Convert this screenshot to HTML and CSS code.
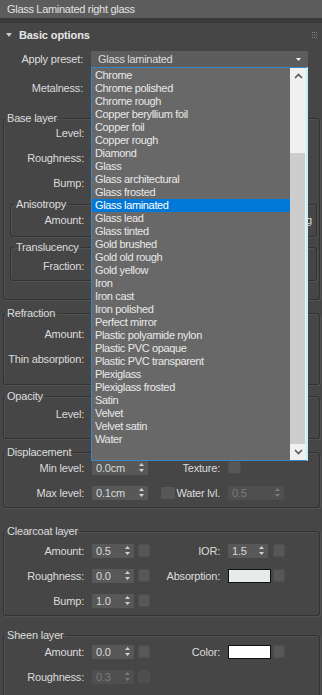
FILE: index.html
```html
<!DOCTYPE html>
<html lang="en">
<head>
    <meta charset="UTF-8">
    <meta name="viewport" content="width=device-width, initial-scale=1.0">
    <title>Glass Laminated right glass</title>
    <link rel="stylesheet" href="styles.css">
</head>
<body>
    <div class="panel">
        <div class="title-field">Glass Laminated right glass</div>
        <div class="title-gap"></div>

        <div class="rollout">
            <div class="rollout-head">
                <svg class="twisty" width="6" height="4" viewBox="0 0 6 4"><path d="M0 0h6L3 4z" fill="#c8c8c8"/></svg>
                <span>Basic options</span>
                <svg class="grip" width="5" height="6" viewBox="0 0 5 6"><path d="M0 0h1v1H0zM2 0h1v1H2zM4 0h1v1H4zM0 2.5h1v1H0zM2 2.5h1v1H2zM4 2.5h1v1H4zM0 5h1v1H0zM2 5h1v1H2zM4 5h1v1H4z" fill="#8a8a8a"/></svg>
            </div>

            <div class="row top">
                <span class="lbl">Apply preset:</span>
                <div class="select">
                    <span>Glass laminated</span>
                    <svg width="5" height="3" viewBox="0 0 5 3"><path d="M0 0h5L2.5 3z" fill="#f0f0f0"/></svg>
                </div>
            </div>
            <!-- controls of the rows below are hidden by the open list -->
            <div class="row top metal">
                <span class="lbl">Metalness:</span>
            </div>

            <fieldset class="group g-base">
                <legend>Base layer</legend>
                <div class="body">
                    <div class="row"><span class="lbl">Level:</span></div>
                    <div class="row"><span class="lbl">Roughness:</span></div>
                    <div class="row"><span class="lbl">Bump:</span></div>

                    <fieldset class="group nested g-aniso">
                        <legend>Anisotropy</legend>
                        <div class="body">
                            <div class="row"><span class="lbl">Amount:</span><span class="far">g</span></div>
                        </div>
                    </fieldset>

                    <fieldset class="group nested g-transl">
                        <legend>Translucency</legend>
                        <div class="body">
                            <div class="row"><span class="lbl">Fraction:</span></div>
                        </div>
                    </fieldset>
                </div>
            </fieldset>

            <fieldset class="group g-refr">
                <legend>Refraction</legend>
                <div class="body">
                    <div class="row"><span class="lbl">Amount:</span></div>
                    <div class="row"><span class="lbl">Thin absorption:</span></div>
                </div>
            </fieldset>

            <fieldset class="group g-opac">
                <legend>Opacity</legend>
                <div class="body">
                    <div class="row"><span class="lbl">Level:</span></div>
                </div>
            </fieldset>

            <fieldset class="group g-disp">
                <legend>Displacement</legend>
                <div class="body">
                    <div class="row">
                        <span class="lbl">Min level:</span>
                        <div class="cell1">
                            <div class="spin w56"><span>0.0cm</span><svg width="5" height="9" viewBox="0 0 5 9"><path d="M2.5 0L5 3H0zM0 6h5L2.5 9z" fill="#d0d0d0"/></svg></div>
                        </div>
                        <span class="lbl2">Texture:</span>
                        <div class="cell2"><span class="sq big"></span></div>
                    </div>
                    <div class="row">
                        <span class="lbl">Max level:</span>
                        <div class="cell1">
                            <div class="spin w56"><span>0.1cm</span><svg width="5" height="9" viewBox="0 0 5 9"><path d="M2.5 0L5 3H0zM0 6h5L2.5 9z" fill="#d0d0d0"/></svg></div>
                        </div>
                        <span class="lbl2"><span class="check"></span><span>Water lvl.</span></span>
                        <div class="cell2">
                            <div class="spin w56 off"><span>0.5</span><svg width="5" height="9" viewBox="0 0 5 9"><path d="M2.5 0L5 3H0zM0 6h5L2.5 9z" fill="#7a7a7a"/></svg></div>
                        </div>
                    </div>
                </div>
            </fieldset>

            <fieldset class="group g-clear">
                <legend>Clearcoat layer</legend>
                <div class="body">
                    <div class="row">
                        <span class="lbl">Amount:</span>
                        <div class="cell1"><div class="spin w42"><span>0.5</span><svg width="5" height="9" viewBox="0 0 5 9"><path d="M2.5 0L5 3H0zM0 6h5L2.5 9z" fill="#d0d0d0"/></svg></div><span class="sq"></span></div>
                        <span class="lbl2">IOR:</span>
                        <div class="cell2"><div class="spin w40"><span>1.5</span><svg width="5" height="9" viewBox="0 0 5 9"><path d="M2.5 0L5 3H0zM0 6h5L2.5 9z" fill="#d0d0d0"/></svg></div><span class="sq"></span></div>
                    </div>
                    <div class="row">
                        <span class="lbl">Roughness:</span>
                        <div class="cell1"><div class="spin w42"><span>0.0</span><svg width="5" height="9" viewBox="0 0 5 9"><path d="M2.5 0L5 3H0zM0 6h5L2.5 9z" fill="#d0d0d0"/></svg></div><span class="sq"></span></div>
                        <span class="lbl2">Absorption:</span>
                        <div class="cell2"><span class="swatch absorb"></span><span class="sq"></span></div>
                    </div>
                    <div class="row">
                        <span class="lbl">Bump:</span>
                        <div class="cell1"><div class="spin w42"><span>1.0</span><svg width="5" height="9" viewBox="0 0 5 9"><path d="M2.5 0L5 3H0zM0 6h5L2.5 9z" fill="#d0d0d0"/></svg></div><span class="sq"></span></div>
                    </div>
                </div>
            </fieldset>

            <fieldset class="group g-sheen">
                <legend>Sheen layer</legend>
                <div class="body">
                    <div class="row">
                        <span class="lbl">Amount:</span>
                        <div class="cell1"><div class="spin w42"><span>0.0</span><svg width="5" height="9" viewBox="0 0 5 9"><path d="M2.5 0L5 3H0zM0 6h5L2.5 9z" fill="#d0d0d0"/></svg></div><span class="sq"></span></div>
                        <span class="lbl2">Color:</span>
                        <div class="cell2"><span class="swatch"></span><span class="sq"></span></div>
                    </div>
                    <div class="row">
                        <span class="lbl">Roughness:</span>
                        <div class="cell1"><div class="spin w42 off"><span>0.3</span><svg width="5" height="9" viewBox="0 0 5 9"><path d="M2.5 0L5 3H0zM0 6h5L2.5 9z" fill="#7a7a7a"/></svg></div><span class="sq dim"></span></div>
                    </div>
                </div>
            </fieldset>
        </div>

        <!-- open dropdown of "Apply preset" -->
        <div class="preset-list">
            <ul class="items">
                <li>Chrome</li>
                <li>Chrome polished</li>
                <li>Chrome rough</li>
                <li>Copper beryllium foil</li>
                <li>Copper foil</li>
                <li>Copper rough</li>
                <li>Diamond</li>
                <li>Glass</li>
                <li>Glass architectural</li>
                <li>Glass frosted</li>
                <li class="sel">Glass laminated</li>
                <li>Glass lead</li>
                <li>Glass tinted</li>
                <li>Gold brushed</li>
                <li>Gold old rough</li>
                <li>Gold yellow</li>
                <li>Iron</li>
                <li>Iron cast</li>
                <li>Iron polished</li>
                <li>Perfect mirror</li>
                <li>Plastic polyamide nylon</li>
                <li>Plastic PVC opaque</li>
                <li>Plastic PVC transparent</li>
                <li>Plexiglass</li>
                <li>Plexiglass frosted</li>
                <li>Satin</li>
                <li>Velvet</li>
                <li>Velvet satin</li>
                <li>Water</li>
            </ul>
            <div class="scrollbar">
                <div class="sb-btn"><svg width="9" height="6" viewBox="0 0 9 6"><path d="M1 5L4.5 1.5 8 5" fill="none" stroke="#5a5a5a" stroke-width="1.6"/></svg></div>
                <div class="sb-space"></div>
                <div class="sb-thumb"></div>
                <div class="sb-btn"><svg width="9" height="6" viewBox="0 0 9 6"><path d="M1 1l3.5 3.5L8 1" fill="none" stroke="#5a5a5a" stroke-width="1.6"/></svg></div>
            </div>
        </div>
    </div>
</body>
</html>
```

FILE: styles.css
```css
* {
    margin: 0;
    padding: 0;
    box-sizing: border-box;
}

body {
    background: #464646;
    font-family: "Liberation Sans", Arial, sans-serif;
    font-size: 11px;
    color: #dcdcdc;
    letter-spacing: -0.2px;
}

.panel {
    position: relative;
    width: 322px;
    height: 695px;
    overflow: hidden;
}

.title-field {
    height: 18px;
    line-height: 18px;
    padding-left: 7px;
    background: #5c5c5c;
    color: #e2e2e2;
    letter-spacing: -0.3px;
}

.title-gap {
    height: 5px;
    background: #3b3b3b;
}

.rollout-head {
    display: flex;
    align-items: center;
    height: 24px;
    padding: 0 5px 0 6px;
    font-weight: bold;
    color: #e6e6e6;
    letter-spacing: -0.1px;
}

.twisty {
    margin-right: 7px;
}

.grip {
    margin-left: auto;
}

/* rows */
.row {
    display: flex;
    align-items: center;
    height: 25px;
}

.row.top {
    height: 24px;
}

.row.metal {
    margin-top: 5px;
}

.lbl {
    flex: none;
    width: 88px;
    padding-right: 8px;
    text-align: right;
    white-space: nowrap;
}

.top .lbl {
    width: 91px;
}

.nested .lbl {
    width: 81px;
}

.cell1 {
    flex: none;
    width: 70px;
    display: flex;
    align-items: center;
    gap: 4px;
}

.lbl2 {
    flex: none;
    width: 66px;
    padding-right: 8px;
    display: flex;
    align-items: center;
    justify-content: flex-end;
    white-space: nowrap;
}

.cell2 {
    display: flex;
    align-items: center;
}

.far {
    margin-left: auto;
    margin-right: 4px;
}

/* controls */
.select {
    width: 217px;
    height: 17px;
    display: flex;
    align-items: center;
    justify-content: space-between;
    padding: 0 7px;
    background: #5d5d5d;
    letter-spacing: -0.3px;
}

.spin {
    flex: none;
    height: 14px;
    display: flex;
    align-items: center;
    justify-content: space-between;
    padding: 0 4px;
    background: #585858;
    border-radius: 1px;
    color: #d8d8d8;
}

.spin.off {
    color: #7c7c7c;
    background: #4f4f4f;
}

.w56 { width: 56px; }
.w42 { width: 42px; }
.w40 { width: 40px; }

.sq {
    flex: none;
    width: 12px;
    height: 13px;
    background: #575757;
    border: 1px solid #4f4f4f;
    border-radius: 2px;
}

.cell2 .sq {
    margin-left: 5px;
}

.cell2 .sq.big {
    width: 13px;
    margin-left: 0;
}

.sq.dim {
    background: #4e4e4e;
}

.check {
    width: 14px;
    height: 12px;
    margin-right: auto;
    margin-left: -1px;
    background: #575757;
    border-radius: 2px;
}

.swatch {
    width: 43px;
    height: 14px;
    background: #ffffff;
    border: 1px solid #111;
}

.swatch.absorb {
    background: #e8ece9;
}

.cell2 .swatch + .sq {
    margin-left: 2px;
}

/* group boxes */
.group {
    min-width: 0;
    margin: 0 2px 0 3px;
    padding: 0;
    border: 1px solid #323232;
    border-radius: 3px;
    box-shadow: inset 1px 1px 0 #525252, 1px 1px 0 #525252;
}

.group legend {
    height: 12px;
    line-height: 12px;
    margin-left: 1px;
    padding: 0 2px;
    color: #dcdcdc;
}

.group.nested {
    margin: 0 2px 0 6px;
}

.group.nested legend {
    margin-left: 3px;
}

.group.g-base { margin-top: 12px; padding-bottom: 18px; }
.g-base > .body { margin-top: -4px; }

.group.g-aniso { margin-top: 3px; padding-bottom: 4px; }
.g-aniso > .body { margin-top: -3px; }

.group.g-transl { margin-top: 4px; padding-bottom: 2px; }

.group.g-refr { margin-top: 7px; padding-bottom: 13px; }
.g-refr > .body { margin-top: 2px; }

.group.g-opac { margin-top: 5px; padding-bottom: 12px; }
.g-opac > .body { margin-top: -1px; }

.group.g-disp { margin-top: 7px; padding-bottom: 2px; }
.g-disp > .body { margin-top: -3px; }

.group.g-clear { margin-top: 17px; padding-bottom: 2px; }
.g-clear > .body { margin-top: 1px; }

.group.g-sheen { margin-top: 13px; padding-bottom: 20px; }
.g-sheen > .body { margin-top: -2px; }

/* dropdown list */
.preset-list {
    position: absolute;
    left: 91px;
    top: 67px;
    width: 217px;
    height: 394px;
    display: flex;
    background: #686868;
    border: 1px solid #3d85c0;
    border-right: 2px solid #c4eef8;
}

.items {
    flex: 1;
    list-style: none;
    padding-top: 1px;
    color: #e8e8e8;
    letter-spacing: -0.35px;
}

.items li {
    height: 13px;
    line-height: 13px;
    padding-left: 3px;
    white-space: nowrap;
    overflow: hidden;
}

.items li.sel {
    background: #0078d7;
    color: #ffffff;
}

.scrollbar {
    width: 16px;
    display: flex;
    flex-direction: column;
    background: #f0f0f0;
}

.sb-btn {
    height: 16px;
    display: flex;
    align-items: center;
    justify-content: center;
}

.sb-space {
    height: 69px;
}

.sb-thumb {
    flex: 1;
    margin-right: 1px;
    background: #cdcdcd;
}
```
